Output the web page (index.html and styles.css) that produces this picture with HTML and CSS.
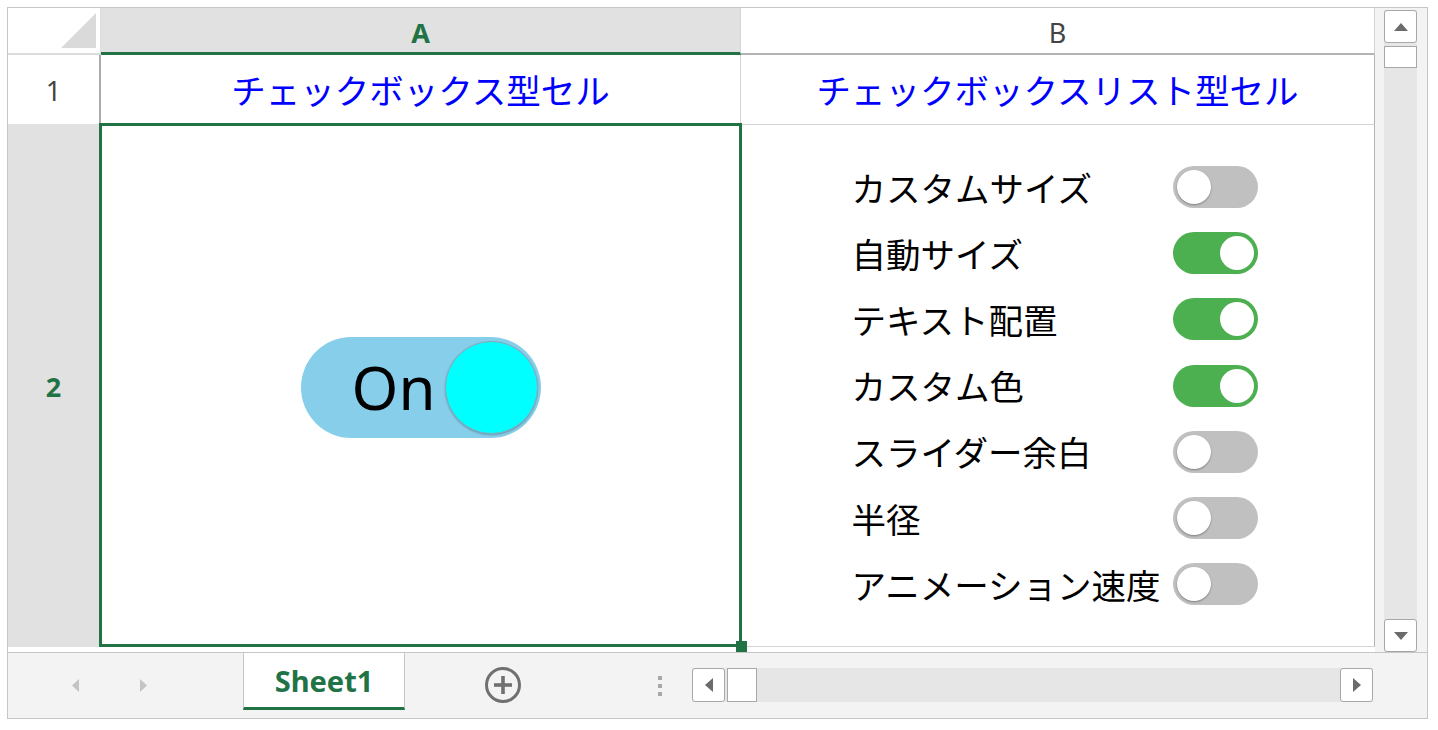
FILE: index.html
```html
<!DOCTYPE html>
<html lang="ja">
<head>
  <meta charset="UTF-8">
  <title>チェックボックス型セル</title>
  <link rel="stylesheet" href="styles.css">
</head>
<body>

  <div class="workbook">
    <div class="main">
      <div class="sheet">
        <div class="corner"><span class="corner-tri"></span></div>
        <div class="col-head active">A</div>
        <div class="col-head last">B</div>

        <div class="row-head">1</div>
        <div class="cell title">チェックボックス型セル</div>
        <div class="cell title last">チェックボックスリスト型セル</div>

        <div class="row-head active">2</div>
        <div class="cell sel">
          <div class="big-toggle">
            <span class="big-text">On</span>
            <span class="big-knob"></span>
          </div>
          <div class="sel-box"></div>
          <span class="fill-handle"></span>
        </div>
        <div class="cell last list-cell">
          <div class="opt-list">
            <span class="opt-label">カスタムサイズ</span><span class="switch"><i></i></span>
            <span class="opt-label">自動サイズ</span><span class="switch on"><i></i></span>
            <span class="opt-label">テキスト配置</span><span class="switch on"><i></i></span>
            <span class="opt-label">カスタム色</span><span class="switch on"><i></i></span>
            <span class="opt-label">スライダー余白</span><span class="switch"><i></i></span>
            <span class="opt-label">半径</span><span class="switch"><i></i></span>
            <span class="opt-label">アニメーション速度</span><span class="switch"><i></i></span>
          </div>
        </div>
      </div>

      <div class="vscroll">
        <div class="vtrack">
          <div class="sb-btn">
            <svg width="14" height="8" viewBox="0 0 14 8"><polygon points="0,8 14,8 7,0" fill="#6b6b6b"/></svg>
          </div>
          <div class="vthumb"></div>
          <div class="spacer"></div>
          <div class="sb-btn">
            <svg width="14" height="8" viewBox="0 0 14 8"><polygon points="0,0 14,0 7,8" fill="#6b6b6b"/></svg>
          </div>
        </div>
      </div>
    </div>

    <div class="tabbar">
      <div class="tab-nav">
        <svg width="7" height="13" viewBox="0 0 7 13"><polygon points="7,0 7,13 0,6.5" fill="#c4c4c4"/></svg>
        <svg width="7" height="13" viewBox="0 0 7 13"><polygon points="0,0 0,13 7,6.5" fill="#c4c4c4"/></svg>
      </div>
      <div class="tab">Sheet1</div>
      <div class="add-sheet">
        <svg width="38" height="38" viewBox="0 0 38 38">
          <circle cx="19" cy="19" r="16.5" fill="none" stroke="#707070" stroke-width="3"/>
          <rect x="10" y="17.2" width="18" height="3.6" fill="#707070"/>
          <rect x="17.2" y="10" width="3.6" height="18" fill="#707070"/>
        </svg>
      </div>
      <div class="split-dots"><i></i><i></i><i></i></div>
      <div class="hscroll">
        <div class="sb-btn">
          <svg width="8" height="14" viewBox="0 0 8 14"><polygon points="8,0 8,14 0,7" fill="#6b6b6b"/></svg>
        </div>
        <div class="hthumb"></div>
        <div class="spacer"></div>
        <div class="sb-btn">
          <svg width="8" height="14" viewBox="0 0 8 14"><polygon points="0,0 0,14 8,7" fill="#6b6b6b"/></svg>
        </div>
      </div>
    </div>
  </div>

</body>
</html>
```

FILE: styles.css
```css
* {
  box-sizing: border-box;
}

body {
  margin: 0;
  background: #fff;
  font-family: "Noto Sans", "Open Sans", "Noto Sans CJK JP", sans-serif;
}

.workbook {
  width: 1421px;
  margin: 7px 0 0 7px;
  border: 1px solid #c6c6c6;
}

.main {
  display: flex;
  height: 645px;
  border-bottom: 1px solid #c6c6c6;
}

/* grid */
.sheet {
  display: grid;
  grid-template-columns: 93px 640px 634px;
  grid-template-rows: 47px 70px 522px;
  width: 1367px;
}

.corner {
  display: flex;
  justify-content: flex-end;
  align-items: flex-end;
  padding: 0 4px 5px 0;
  border-right: 1px solid #dcdcdc;
  border-bottom: 2px solid #dcdcdc;
}

.corner-tri {
  width: 35px;
  height: 35px;
  background: #dadada;
  clip-path: polygon(100% 0, 100% 100%, 0 100%);
}

.col-head {
  display: flex;
  align-items: center;
  justify-content: center;
  padding-top: 4px;
  font-size: 27px;
  color: #444;
  border-right: 1px solid #d4d4d4;
  border-bottom: 2px solid #b4b4b4;
}

.col-head.active {
  background: #e1e1e1;
  color: #217346;
  font-weight: bold;
  border-bottom: 3px solid #217346;
}

.row-head {
  display: flex;
  align-items: center;
  justify-content: center;
  padding-top: 2px;
  font-size: 27px;
  color: #444;
  border-right: 2px solid #ababab;
  border-bottom: 1px solid #e2e2e2;
}

.row-head.active {
  background: #e1e1e1;
  color: #217346;
  font-weight: bold;
}

.cell {
  border-right: 1px solid #d4d4d4;
  border-bottom: 1px solid #d4d4d4;
}

.cell.last {
  border-right: 1px solid #b4b4b4;
}

.title {
  display: flex;
  align-items: center;
  justify-content: center;
  padding-bottom: 2px;
  font-family: "Noto Sans CJK JP", sans-serif;
  font-size: 34.5px;
  color: #0000ff;
}

/* selected cell with toggle */
.sel {
  position: relative;
  display: flex;
  align-items: center;
  justify-content: center;
  padding-top: 3px;
}

.sel-box {
  position: absolute;
  top: -2px;
  left: -2px;
  right: -2px;
  bottom: -1px;
  border: 3px solid #217346;
}

.fill-handle {
  position: absolute;
  right: -7px;
  bottom: -6px;
  width: 11px;
  height: 11px;
  background: #217346;
}

.big-toggle {
  display: flex;
  align-items: center;
  justify-content: flex-end;
  gap: 9px;
  width: 240px;
  height: 101px;
  padding-right: 3px;
  border-radius: 51px;
  background: #87ceeb;
}

.big-text {
  font-size: 60px;
  color: #000;
  line-height: 1;
}

.big-knob {
  width: 93px;
  height: 93px;
  border-radius: 50%;
  background: #00ffff;
  border: 1px solid #8aaabb;
  box-shadow: 0 1px 2px rgba(0, 0, 0, 0.25);
}

/* checkbox list */
.list-cell {
  display: flex;
  align-items: center;
  justify-content: center;
}

.opt-list {
  display: grid;
  grid-template-columns: auto 85px;
  grid-auto-rows: 66.2px;
  align-items: center;
  column-gap: 12px;
  margin-left: -6px;
}

.opt-label {
  font-family: "Noto Sans CJK JP", sans-serif;
  font-size: 34.5px;
  color: #000;
  line-height: 1;
}

.switch {
  display: flex;
  align-items: center;
  width: 85px;
  height: 42px;
  padding: 0 4px;
  border-radius: 21px;
  background: #c0c0c0;
}

.switch i {
  width: 34px;
  height: 34px;
  border-radius: 50%;
  background: #fff;
  box-shadow: 0 1px 2px rgba(0, 0, 0, 0.35);
}

.switch.on {
  justify-content: flex-end;
  background: #4caf50;
}

.switch.on i {
  box-shadow: none;
}

/* scrollbars */
.vscroll {
  width: 52px;
  padding: 2px 10px 0 9px;
  background: #f3f3f3;
}

.vtrack {
  display: flex;
  flex-direction: column;
  height: 100%;
  background: #e6e6e6;
}

.sb-btn {
  display: flex;
  align-items: center;
  justify-content: center;
  width: 33px;
  height: 33px;
  background: #fff;
  border: 1px solid #a8a8a8;
  border-radius: 3px;
}

.vthumb {
  height: 22px;
  margin-top: 3px;
  background: #fff;
  border: 1px solid #a8a8a8;
}

.spacer {
  flex: 1;
}

.tabbar {
  display: flex;
  align-items: flex-start;
  height: 65px;
  background: #f3f3f3;
}

.tab-nav {
  display: flex;
  align-items: center;
  gap: 61px;
  width: 235px;
  height: 64px;
  padding-left: 64px;
}

.tab {
  display: flex;
  align-items: center;
  justify-content: center;
  width: 162px;
  height: 57px;
  background: #fff;
  border-left: 1px solid #c6c6c6;
  border-right: 1px solid #c6c6c6;
  border-bottom: 3px solid #217346;
  font-size: 29px;
  font-weight: bold;
  color: #217346;
}

.add-sheet {
  display: flex;
  margin: 13px 0 0 79px;
}

.split-dots {
  display: flex;
  flex-direction: column;
  gap: 4px;
  margin: 23px 0 0 136px;
}

.split-dots i {
  width: 4px;
  height: 4px;
  background: #a8a8a8;
}

.hscroll {
  display: flex;
  width: 681px;
  height: 34px;
  margin: 15px 0 0 30px;
  background: #e6e6e6;
}

.hscroll .sb-btn {
  height: 34px;
}

.hthumb {
  width: 30px;
  margin-left: 2px;
  background: #fff;
  border: 1px solid #a8a8a8;
}
```
